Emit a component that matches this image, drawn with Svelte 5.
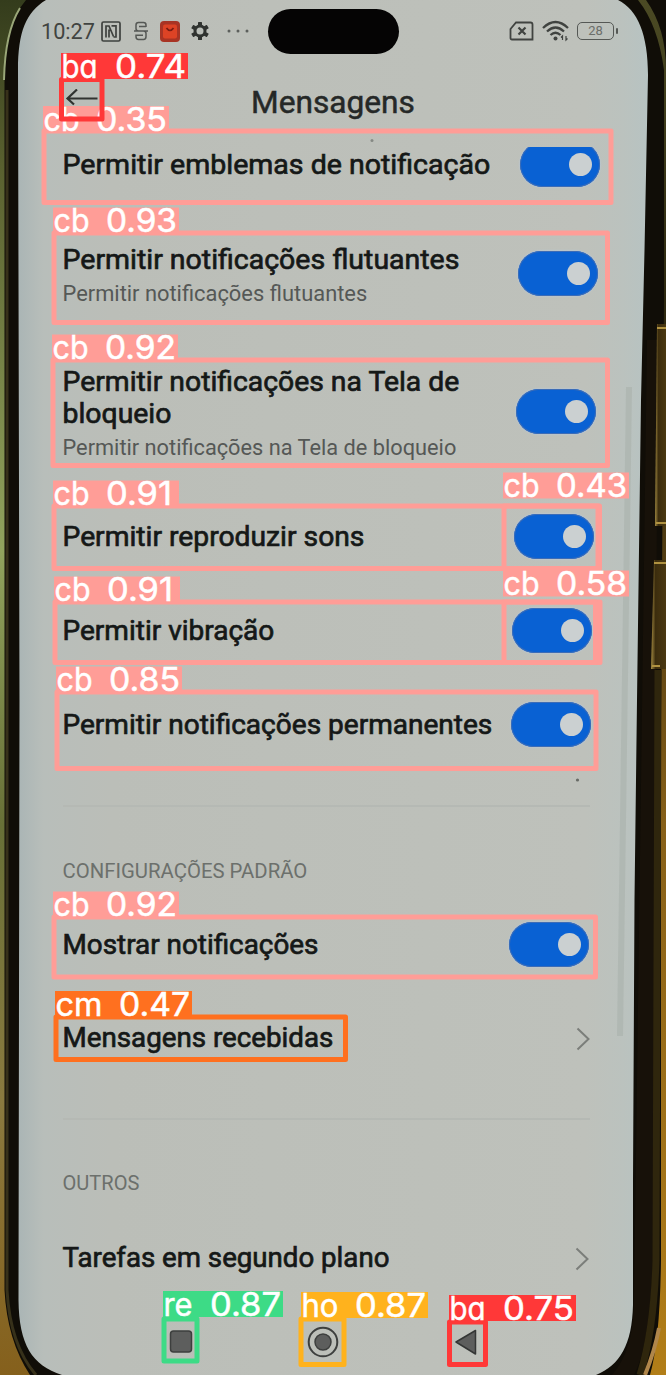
<script>
  const rows = [
    { lines: [['Permitir emblemas de notificação', 428]], end: 66, toggle: true },
    { lines: [['Permitir notificações flutuantes', 397]], sub: ['Permitir notificações flutuantes', 305], end: 68, toggle: true, dy: 3 },
    { lines: [['Permitir notificações na Tela de', 397], ['bloqueio', 109]], sub: ['Permitir notificações na Tela de bloqueio', 394], end: 70, toggle: true, dy: 3 },
    { lines: [['Permitir reproduzir sons', 302]], end: 72, toggle: true },
    { lines: [['Permitir vibração', 212]], end: 74, toggle: true },
    { lines: [['Permitir notificações permanentes', 430]], end: 75, toggle: true },
    { divider: true },
    { section: ['CONFIGURAÇÕES PADRÃO', 245] },
    { lines: [['Mostrar notificações', 256]], end: 77, toggle: true },
    { lines: [['Mensagens recebidas', 271]], end: 76 },
    { divider: true },
    { section: ['OUTROS', 77] },
    { lines: [['Tarefas em segundo plano', 327]], end: 77 }
  ];

  const pink = '#ff9d97', red = '#ff3838', orange = '#ff701f', amber = '#ffb21d', green = '#3ddb86';

  // box: x, y, w, h — tag: x, top, width
  const marks = [
    { c: pink, box: [44, 131, 567, 71.5], tag: [43, 106, 126], name: 'cb', n: '0.35' },
    { c: red, box: [61.5, 79.5, 40.5, 39.5], tag: [61, 53, 127], name: 'ba', n: '0.74' },
    { c: pink, box: [54, 233, 553.5, 89.5], tag: [53, 207.5, 126], name: 'cb', n: '0.93' },
    { c: pink, box: [53, 360, 554.5, 105.5], tag: [52, 334.5, 126], name: 'cb', n: '0.92' },
    { c: pink, box: [54, 506, 545.5, 62.5], tag: [53, 480.5, 126], name: 'cb', n: '0.91' },
    { c: pink, box: [504, 506, 94, 62.5], tag: [503, 472.5, 126], name: 'cb', n: '0.43' },
    { c: pink, box: [55, 602, 545, 60.5], tag: [54, 576.5, 126], name: 'cb', n: '0.91' },
    { c: pink, box: [504, 602, 91.5, 60.5], tag: [503, 570.5, 126], name: 'cb', n: '0.58' },
    { c: pink, box: [57, 692, 539, 76.5], tag: [56, 666.5, 126], name: 'cb', n: '0.85' },
    { c: pink, box: [54, 917, 541.5, 60], tag: [53, 891.5, 126], name: 'cb', n: '0.92' },
    { c: orange, box: [56, 1017, 289.5, 42.5], tag: [55, 991, 137], name: 'cm', n: '0.47' },
    { c: green, box: [164, 1319, 33, 42], tag: [163, 1291, 120], name: 're', n: '0.87' },
    { c: amber, box: [301, 1319, 43, 45.5], tag: [301, 1292, 127], name: 'ho', n: '0.87' },
    { c: red, box: [449.5, 1322, 36, 42.5], tag: [449, 1295, 127], name: 'ba', n: '0.75' }
  ];

  const nameWidth = { cb: 36, ba: 36, cm: 47, re: 29, ho: 37 };

  // Sizes a single line of text so that it spans the given width, ligatures kept.
  function fit(node, width) {
    const natural = node.getBoundingClientRect().width;
    const size = parseFloat(getComputedStyle(node).fontSize);
    node.style.fontSize = (size * width) / natural + 'px';
  }
</script>

<div class="photo">
  <svg class="frame" width="666" height="1375" viewBox="0 0 666 1375" aria-hidden="true">
    <defs>
      <linearGradient id="edgeL" x1="0" y1="0" x2="0" y2="1">
        <stop offset="0" stop-color="#343c1c" /><stop offset=".12" stop-color="#59602f" />
        <stop offset=".4" stop-color="#91a35d" /><stop offset=".6" stop-color="#687037" />
        <stop offset=".8" stop-color="#8a7a3f" /><stop offset="1" stop-color="#85601c" />
      </linearGradient>
      <linearGradient id="edgeR" x1="0" y1="0" x2="0" y2="1">
        <stop offset="0" stop-color="#4b4a24" /><stop offset=".22" stop-color="#2d2810" />
        <stop offset=".45" stop-color="#5b4213" /><stop offset=".6" stop-color="#876019" />
        <stop offset="1" stop-color="#b27e18" />
      </linearGradient>
      <linearGradient id="glass" x1="0" y1="0" x2="1" y2="0">
        <stop offset="0" stop-color="#aab5b5" /><stop offset=".04" stop-color="#b8beba" />
        <stop offset=".15" stop-color="#bbbeb8" /><stop offset=".9" stop-color="#bec1bb" />
        <stop offset=".96" stop-color="#bbc2be" /><stop offset="1" stop-color="#b7c3c2" />
      </linearGradient>
      <linearGradient id="gold" x1="0" y1="0" x2="1" y2="0">
        <stop offset="0" stop-color="#a58c42" /><stop offset=".3" stop-color="#3c2d0e" />
        <stop offset="1" stop-color="#4b3912" />
      </linearGradient>
    </defs>
    <rect width="666" height="1375" fill="#100d07" />
    <path d="M0 0H26Q5 25 4.500 70V1290Q7 1340 30 1375H0Z" fill="url(#edgeL)" />
    <path d="M7 90V1290Q10 1345 36 1375" fill="none" stroke="#37311a" stroke-width="3" />
    <path d="M20 8Q5 32 4 80" fill="none" stroke="#9aa778" stroke-width="2" />
    <path d="M646 0Q666 28 666 70V1375H650Q660 1340 661 1260V720L664 300V70Q658 25 638 0Z" fill="url(#edgeR)" />
    <path d="M657 340V500L653 1260Q650 1345 634 1375H612Q634 1350 634 1300L647 340Z" fill="#171109" />
    <path d="M658 670L656 1260Q654 1330 640 1375" fill="none" stroke="#2f260d" stroke-width="7" />
    <path d="M659 1328Q655 1350 645 1375" fill="none" stroke="#b0864a" stroke-width="4" />
    <path d="M666 324H657L655 526H666Z" fill="url(#gold)" />
    <path d="M666 560H654L651 669H666Z" fill="url(#gold)" />
    <path d="M657 328H666M656 523H666M654 563H666M652 666H660" stroke="#b09241" stroke-width="2" />
    <path d="M46 0H618C638 10 648 35 648 75L644.500 250L641 400L637 700L634.500 900L633 1180V1305C632 1345 620 1365 596 1375H62C32 1365 19 1345 18.500 1300L19.500 700L18 70C18 32 26 12 46 0Z" fill="url(#glass)" />
    <path d="M626 387H632L623 1036H617Z" fill="#aeb5b0" opacity=".8" />
    <circle cx="372" cy="140.500" r="1.500" fill="#858984" />
    <circle cx="577.500" cy="780" r="1.600" fill="#686b66" />
  </svg>

  <main class="screen">
    <header class="status">
      <div class="left">
        <span class="clock" use:fit={54}>10:27</span>
        <svg class="nfc" width="20" height="21" viewBox="0 0 20 21" fill="none" stroke="#3e413e" stroke-width="1.700">
          <rect x="1" y="1" width="18" height="19" rx="1.500" />
          <path d="M5 16.500V5H8L12.500 15.500M8 8.500V16.500M10.500 4.800H15V16H12.500" />
        </svg>
        <svg class="sync" width="14" height="20" viewBox="0 0 14 20" fill="none" stroke="#555855" stroke-width="1.500">
          <path d="M12 6V4Q12 1.500 9.500 1.500H4.500Q2 1.500 2 4V7.500Q2 10 4.500 10H9.500Q12 10 12 12.500V15.500Q12 18.500 9.500 18.500H4.500Q2 18.500 2 15.500V13.500M0 10H14M5 5.500H12M2 14.200H9" />
        </svg>
        <svg class="app" width="20" height="21" viewBox="0 0 20 21">
          <rect width="20" height="21" rx="4" fill="#a83424" />
          <rect x="3" y="3.500" width="14" height="14" rx="2" fill="#dd4325" />
          <path d="M6.500 7Q10 12 13.500 7" fill="none" stroke="#7b1c12" stroke-width="1.700" />
        </svg>
        <svg class="gear" width="18" height="20" viewBox="0 0 18 20">
          <g fill="#303330">
            <rect x="7" y="1" width="4" height="18" rx=".5" />
            <rect x="7" y="1" width="4" height="18" rx=".5" transform="rotate(60 9 10)" />
            <rect x="7" y="1" width="4" height="18" rx=".5" transform="rotate(120 9 10)" />
            <circle cx="9" cy="10" r="6.500" />
          </g>
          <circle cx="9" cy="10" r="3.500" fill="#bbbfb9" />
        </svg>
        <svg class="dots" width="22" height="4" viewBox="0 0 22 4" fill="#5c5f5c">
          <circle cx="2" cy="2" r="1.500" /><circle cx="11" cy="2" r="1.500" /><circle cx="20" cy="2" r="1.500" />
        </svg>
      </div>
      <div class="camera"></div>
      <div class="right">
        <svg width="25" height="20" viewBox="0 0 25 20" fill="none" stroke="#404340" stroke-width="1.800">
          <path d="M7 1.500H21.500Q23.500 1.500 23.500 3.500V18.500H3Q1.500 18.500 1.500 17V8Z" />
          <path d="M9.500 6.500L16.500 13.500M16.500 6.500L9.500 13.500" stroke-width="2.200" />
        </svg>
        <svg width="28" height="22" viewBox="0 0 28 22" fill="none" stroke="#404340" stroke-width="2.300">
          <path d="M1 8Q13.500 -4 26 8M5 11.500Q13.500 3.500 22 11.500M8.500 15Q13.500 10.500 18.500 15" />
          <circle cx="13.500" cy="18.500" r="2" fill="#404340" stroke="none" />
          <path d="M20.500 20V16L19 17.500M24 16V20L25.500 18.500" stroke-width="1.200" />
        </svg>
        <div class="battery"><span>28</span><i></i></div>
      </div>
    </header>

    <div class="title">
      <svg width="35" height="18" viewBox="0 0 35 18" fill="none" stroke="#303330" stroke-width="2.200">
        <path d="M32.500 9.500H2.500M12 .5L2.500 9.500L9 15.500" />
      </svg>
      <h1><span use:fit={164}>Mensagens</span></h1>
    </div>

    <div class="list">
      {#each rows as row}
        {#if row.divider}
          <div class="row"><hr /></div>
        {:else if row.section}
          <div class="row"><h2 use:fit={row.section[1]}>{row.section[0]}</h2></div>
        {:else}
          <div class="row" style:padding-right="{row.end}px">
            <div class="copy" style:top="{row.dy ?? 0}px">
              {#each row.lines as [text, width]}
                <strong use:fit={width}>{text}</strong>
              {/each}
              {#if row.sub}<small use:fit={row.sub[1]}>{row.sub[0]}</small>{/if}
            </div>
            {#if row.toggle}
              <span class="toggle"><i></i></span>
            {:else}
              <svg class="chevron" width="14" height="24" viewBox="0 0 14 24" fill="none" stroke="#7b7e7a" stroke-width="2"><path d="M1.500 1.500L12.500 12L1.500 22.500" /></svg>
            {/if}
          </div>
        {/if}
      {/each}
    </div>

    <nav>
      <svg width="24" height="24" viewBox="0 0 24 24"><rect x="1.500" y="1" width="21" height="21" rx="3" fill="#5d5e5d" stroke="#3d3f3e" stroke-width="1.500" /></svg>
      <svg width="32" height="32" viewBox="0 0 32 32"><circle cx="16" cy="16" r="14.300" fill="none" stroke="#3d3f3e" stroke-width="2" /><circle cx="16" cy="16" r="8" fill="#5d5e5d" stroke="#3d3f3e" stroke-width="1.500" /></svg>
      <svg width="22" height="26" viewBox="0 0 22 26"><path d="M20.500 1.500V25L1 13Z" fill="#5d5e5d" stroke="#343635" stroke-width="1.500" stroke-linejoin="round" /></svg>
    </nav>
  </main>

  <svg class="marks" width="666" height="1375" viewBox="0 0 666 1375">
    {#each marks as m}
      <rect x={m.box[0]} y={m.box[1]} width={m.box[2]} height={m.box[3]} fill="none" stroke={m.c} stroke-width="5" stroke-linejoin="round" />
      <rect x={m.tag[0]} y={m.tag[1]} width={m.tag[2]} height="26" fill={m.c} />
      <text x={m.tag[0] + .5} y={m.tag[1] + 24.5} textLength={nameWidth[m.name]} lengthAdjust="spacingAndGlyphs">{m.name}</text>
      <text x={m.tag[0] + m.tag[2] - 73} y={m.tag[1] + 24.5} textLength={m.n.endsWith('1') ? 66 : 71} lengthAdjust="spacingAndGlyphs">{m.n}</text>
    {/each}
  </svg>
</div>

<style>
  :global(body) { margin: 0; background: #100d07; }
  .photo { position: relative; width: 666px; height: 1375px; overflow: hidden; font-family: Roboto, sans-serif; color: #151817; }
  .frame, .marks { position: absolute; inset: 0; display: block; }
  .marks text { font: 400 32.500px Inter, sans-serif; font-feature-settings: "cv11" 1; fill: #fff; stroke: #fff; stroke-width: .5px; }
  .screen { position: relative; display: flex; flex-direction: column; height: 1375px; }
  .screen svg { flex: none; display: block; }

  .status { display: grid; grid-template-columns: 268px 131px 1fr; height: 62px; align-items: center; }
  .left { display: flex; align-items: center; padding-left: 41px; }
  .clock { font-size: 22.500px; white-space: nowrap; color: #414441; }
  .nfc { margin-left: 6px; }
  .sync { margin-left: 13px; }
  .app { margin-left: 12px; }
  .gear { margin-left: 11px; }
  .dots { margin-left: 18px; }
  .camera { height: 45px; border-radius: 23px; background: #050404; }
  .right { display: flex; align-items: center; padding-left: 110px; gap: 8px; }
  .battery { position: relative; box-sizing: border-box; width: 37px; height: 18px; margin-left: -1px; border: 1.500px solid #555855; border-radius: 5px; font-size: 13px; line-height: 16px; text-align: center; color: #6b6e6a; }
  .battery i { position: absolute; right: -5px; top: 5px; width: 2px; height: 6px; background: #555855; border-radius: 1px; }

  .title { display: flex; align-items: center; height: 85px; box-sizing: border-box; padding: 0 0 4px 65px; }
  .title svg { margin-bottom: 9px; }
  h1 { margin: 0 0 0 151px; font-size: 32px; line-height: 36px; font-weight: 400; color: #252827; -webkit-text-stroke: .5px #252827; }
  h1 span { display: inline-block; white-space: nowrap; }

  .list { display: grid; grid-template-rows: 35px 182px 95px 154px 34px 154px 10px 120px 26px 160px 4px 124px 24px; clip-path: inset(0 0 -10px 0); height: 1122px; flex: none; }
  .row { display: flex; align-items: center; justify-content: space-between; padding: 0 76px 0 62.500px; min-height: 0; }
  .copy { position: relative; display: flex; flex-direction: column; align-items: flex-start; padding-top: 1px; }
  strong { font-size: 28px; line-height: 32px; font-weight: 400; -webkit-text-stroke: .7px #151817; white-space: nowrap; }
  small { margin: 3px 0 1px; font-size: 22.500px; line-height: 30px; color: #555856; white-space: nowrap; }
  h2 { margin: 0; font-size: 20.500px; line-height: 24px; font-weight: 400; color: #6c706c; white-space: nowrap; }
  hr { width: 100%; height: 2px; margin: 0; border: 0; background: #b5b9b4; }
  .chevron { margin-top: 3px; }
  .toggle { flex: none; box-sizing: border-box; display: flex; justify-content: flex-end; align-items: center; width: 80px; height: 45px; padding-right: 8px; border-radius: 23px; background: #0961d3; box-shadow: inset 0 0 0 1px #3c6cb6, 0 0 2px #b4cdf0; }
  .toggle i { width: 23px; height: 23px; border-radius: 50%; background: #cbd0d1; }

  nav { display: grid; grid-template-columns: 138px 148px 22px; align-items: center; height: 106px; box-sizing: border-box; padding: 40px 0 0 169px; }
</style>
